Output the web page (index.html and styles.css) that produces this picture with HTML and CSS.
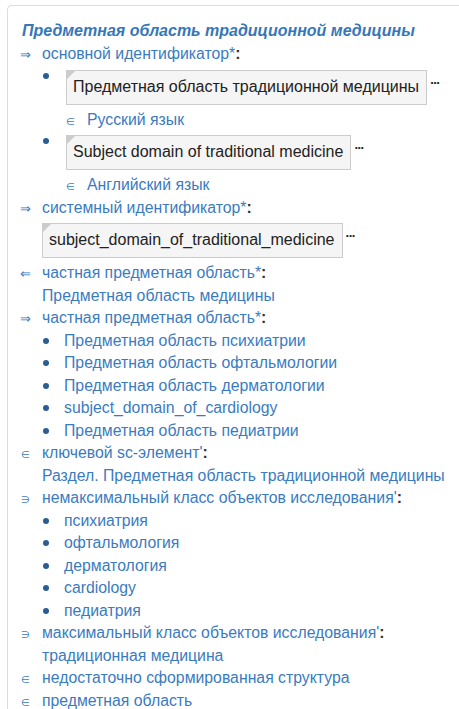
FILE: index.html
```html
<!DOCTYPE html>
<html>
<head>
<meta charset="utf-8">
<link rel="stylesheet" href="styles.css">
</head>
<body>
<div class="panel">
  <div class="title">Предметная область традиционной медицины</div>

  <div class="row"><span class="sym">⇒</span><span class="link">основной идентификатор*</span><span class="colon">:</span></div>
  <div class="sub">
    <div class="boxrow"><span class="dot"></span><div class="box">Предметная область традиционной медицины</div><span class="more">...</span></div>
    <div class="row lang"><span class="sym small">∈</span><span class="link">Русский язык</span></div>
    <div class="boxrow"><span class="dot"></span><div class="box">Subject domain of traditional medicine</div><span class="more">...</span></div>
    <div class="row lang"><span class="sym small">∈</span><span class="link">Английский язык</span></div>
  </div>

  <div class="row"><span class="sym">⇒</span><span class="link">системный идентификатор*</span><span class="colon">:</span></div>
  <div class="boxrow plain"><div class="box">subject_domain_of_traditional_medicine</div><span class="more">...</span></div>

  <div class="row"><span class="sym">⇐</span><span class="link">частная предметная область*</span><span class="colon">:</span></div>
  <div class="row indent"><span class="link">Предметная область медицины</span></div>

  <div class="row"><span class="sym">⇒</span><span class="link">частная предметная область*</span><span class="colon">:</span></div>
  <ul class="list">
    <li><span class="link">Предметная область психиатрии</span></li>
    <li><span class="link">Предметная область офтальмологии</span></li>
    <li><span class="link">Предметная область дерматологии</span></li>
    <li><span class="link">subject_domain_of_cardiology</span></li>
    <li><span class="link">Предметная область педиатрии</span></li>
  </ul>

  <div class="row"><span class="sym small">∈</span><span class="link">ключевой sc-элемент'</span><span class="colon">:</span></div>
  <div class="row indent"><span class="link">Раздел. Предметная область традиционной медицины</span></div>

  <div class="row"><span class="sym small">∋</span><span class="link">немаксимальный класс объектов исследования'</span><span class="colon">:</span></div>
  <ul class="list">
    <li><span class="link">психиатрия</span></li>
    <li><span class="link">офтальмология</span></li>
    <li><span class="link">дерматология</span></li>
    <li><span class="link">cardiology</span></li>
    <li><span class="link">педиатрия</span></li>
  </ul>

  <div class="row"><span class="sym small">∋</span><span class="link">максимальный класс объектов исследования'</span><span class="colon">:</span></div>
  <div class="row indent"><span class="link">традиционная медицина</span></div>
  <div class="row"><span class="sym small">∈</span><span class="link">недостаточно сформированная структура</span></div>
  <div class="row"><span class="sym small">∈</span><span class="link">предметная область</span></div>
</div>
</body>
</html>
```
FILE: styles.css
```css
html, body {
  margin: 0;
  padding: 0;
  background: #fff;
  overflow: hidden;
}
body {
  font-family: "Liberation Sans", Arial, sans-serif;
  font-size: 15.8px;
  color: #333;
}
.panel {
  margin: 5px 0 0 7px;
  border: 1px solid #ddd;
  border-right: none;
  border-top-left-radius: 5px;
  padding: 14px 0 0 12px;
  height: 720px;
  overflow: hidden;
}
.title {
  font-weight: bold;
  font-style: italic;
  font-size: 16px;
  color: #3577b8;
  line-height: 22px;
  padding-left: 2px;
  margin-bottom: 1px;
  white-space: nowrap;
}
.row {
  display: flex;
  align-items: baseline;
  line-height: 22.5px;
  white-space: nowrap;
}
.sym {
  width: 22px;
  font-size: 13px;
  line-height: 1;
  color: #3a7bbf;
  flex: none;
}
.sym.small {
  font-size: 10px;
  padding-left: 1px;
  width: 21px;
}
.link {
  color: #3a7bbf;
}
.colon {
  color: #333;
  font-weight: bold;
}
.indent {
  padding-left: 22px;
}
.sub {
  padding-left: 22px;
}
.boxrow {
  display: flex;
  align-items: flex-start;
  margin: 4px 0 4px 0;
}
.dot {
  width: 6px;
  height: 6px;
  background: #2a5d93;
  border-radius: 50%;
  margin: 3px 17px 0 1px;
  flex: none;
}
.boxrow.plain {
  padding-left: 22px;
}
.box {
  position: relative;
  background: #f5f5f5;
  border: 1px solid #ccc;
  font-size: 16px;
  color: #222;
  line-height: 20px;
  padding: 6px 7px 7px 6px;
  white-space: nowrap;
}
.box::before {
  content: "";
  position: absolute;
  left: 0;
  top: 0;
  border-top: 8px solid #ccc;
  border-right: 8px solid transparent;
}
.more {
  font-size: 13px;
  font-weight: bold;
  color: #222;
  margin: 3px 0 0 3px;
  line-height: 14px;
  letter-spacing: -0.5px;
}
.lang {
  padding-left: 23px;
}
.list {
  list-style: none;
  margin: 0;
  padding: 0 0 0 22px;
}
.list li {
  display: flex;
  align-items: center;
  line-height: 22.5px;
  white-space: nowrap;
}
.list li::before {
  content: "";
  width: 6px;
  height: 6px;
  background: #2a5d93;
  border-radius: 50%;
  margin: 0 15px 0 1px;
  flex: none;
}
```
